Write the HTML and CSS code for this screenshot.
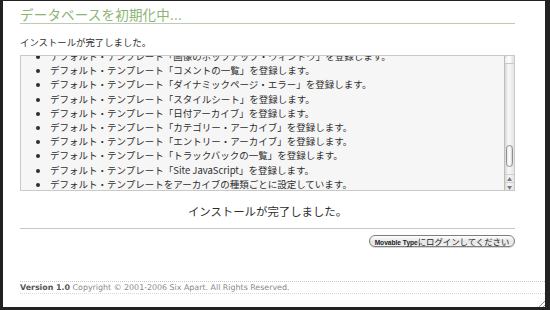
FILE: index.html
```html
<!DOCTYPE html>
<html lang="ja">
<head>
    <meta charset="UTF-8">
    <title>データベースを初期化中... - Movable Type</title>
    <link rel="stylesheet" href="styles.css">
</head>
<body>
    <div class="window">
        <div class="main">
            <h1>データベースを初期化中...</h1>
            <p class="lead">インストールが完了しました。</p>

            <div class="log">
                <div class="log-view">
                    <ul>
                        <li>デフォルト・テンプレート「画像のポップアップ・ウィンドウ」を登録します。</li>
                        <li>デフォルト・テンプレート「コメントの一覧」を登録します。</li>
                        <li>デフォルト・テンプレート「ダイナミックページ・エラー」を登録します。</li>
                        <li>デフォルト・テンプレート「スタイルシート」を登録します。</li>
                        <li>デフォルト・テンプレート「日付アーカイブ」を登録します。</li>
                        <li>デフォルト・テンプレート「カテゴリー・アーカイブ」を登録します。</li>
                        <li>デフォルト・テンプレート「エントリー・アーカイブ」を登録します。</li>
                        <li>デフォルト・テンプレート「トラックバックの一覧」を登録します。</li>
                        <li>デフォルト・テンプレート「Site JavaScript」を登録します。</li>
                        <li>デフォルト・テンプレートをアーカイブの種類ごとに設定しています。</li>
                    </ul>
                </div>
                <div class="scrollbar">
                    <span class="cap"></span>
                    <span class="track"><span class="thumb"></span></span>
                    <span class="arrow">▲</span>
                    <span class="arrow">▼</span>
                </div>
            </div>

            <p class="done">インストールが完了しました。</p>
            <hr>
            <div class="actions">
                <button><span class="latin">Movable Type</span>にログインしてください</button>
            </div>
        </div>

        <div class="footer">
            <b>Version 1.0</b> Copyright © 2001-2006 Six Apart. All Rights Reserved.
        </div>
        <span class="grip"></span>
    </div>
</body>
</html>
```

FILE: styles.css
```css
html, body {
    margin: 0;
    padding: 0;
    background: #ffffff;
}
body {
    font-family: "Noto Sans CJK JP", "DejaVu Sans", sans-serif;
    color: #2e2e2e;
}
.window {
    position: relative;
    box-sizing: border-box;
    width: 550px;
    height: 310px;
    border-style: solid;
    border-color: #222;
    border-width: 1px 5px 3px 3px;
    background: #fff;
    display: flex;
    flex-direction: column;
}
.main {
    padding: 0 30px 0 17px;
    flex: 1;
}
h1 {
    margin: 5px 0 0 0;
    padding: 0 0 1px 0;
    font-size: 13.5px;
    line-height: 16px;
    font-weight: normal;
    letter-spacing: 0.2px;
    color: #8db574;
    border-bottom: 1px solid #bccbb4;
}
.lead {
    margin: 12px 0 0 0;
    font-size: 9.4px;
    line-height: 12px;
}
.log {
    display: flex;
    margin-top: 7px;
    height: 136px;
    box-sizing: border-box;
    border: 1px solid #c9c9c9;
    background: #f6f6f6;
    overflow: hidden;
}
.log-view {
    flex: 1;
    overflow: hidden;
}
.log ul {
    margin: -7px 0 0 0;
    padding: 0 0 0 29px;
    font-size: 9.5px;
    line-height: 14.2px;
    list-style: disc;
}
.scrollbar {
    width: 9px;
    display: flex;
    flex-direction: column;
    background: linear-gradient(to right, #d8d8d8, #f8f8f8 40%, #e4e4e4);
    border-left: 1px solid #bdbdbd;
}
.cap {
    height: 7px;
    border-bottom: 1px solid #c8c8c8;
    border-radius: 4px 4px 0 0;
    background: linear-gradient(to right, #eee, #fff, #ddd);
}
.track {
    flex: 1;
    display: flex;
    flex-direction: column;
    justify-content: flex-end;
    padding-bottom: 7px;
}
.thumb {
    height: 20px;
    margin: 0 1px;
    border: 1px solid #8e8e8e;
    border-radius: 4px;
    background: linear-gradient(to right, #e8e8e8, #ffffff 50%, #d4d4d4);
}
.arrow {
    height: 7px;
    font-size: 5px;
    line-height: 7px;
    text-align: center;
    color: #777;
    border-top: 1px solid #cfcfcf;
}
.done {
    margin: 12px 0 0 0;
    text-align: center;
    font-size: 11.4px;
    line-height: 16px;
}
hr {
    margin: 9px 0 0 0;
    border: none;
    border-top: 1px solid #c6c6c6;
}
.actions {
    display: flex;
    justify-content: flex-end;
    margin-top: 6px;
}
button {
    font-family: "Noto Sans CJK JP", sans-serif;
    font-size: 8.4px;
    color: #222;
    height: 12px;
    width: 146px;
    padding: 0;
    line-height: 10px;
    white-space: nowrap;
    border: 1px solid #7d7d7d;
    border-radius: 6px;
    background: linear-gradient(to bottom, #ffffff, #e6e6e6 55%, #f2f2f2);
    box-shadow: 0 1px 0 #d8d8d8;
}
button .latin {
    font-family: "Liberation Sans", sans-serif;
    font-size: 6.6px;
    font-weight: bold;
}
.footer {
    margin: 0 0 13px 17px;
    padding: 2px 0 1px 0;
    border-top: 1px dotted #c8c8c8;
    border-bottom: 1px dotted #d8d8d8;
    font-family: "DejaVu Sans", sans-serif;
    font-size: 7.9px;
    line-height: 8px;
    color: #8a8a8a;
}
.footer b {
    color: #555;
}
.grip {
    position: absolute;
    right: 0;
    bottom: 0;
    width: 9px;
    height: 9px;
    background: repeating-linear-gradient(135deg, transparent 0 2px, #999 2px 3px);
    clip-path: polygon(100% 0, 100% 100%, 0 100%);
}
```
